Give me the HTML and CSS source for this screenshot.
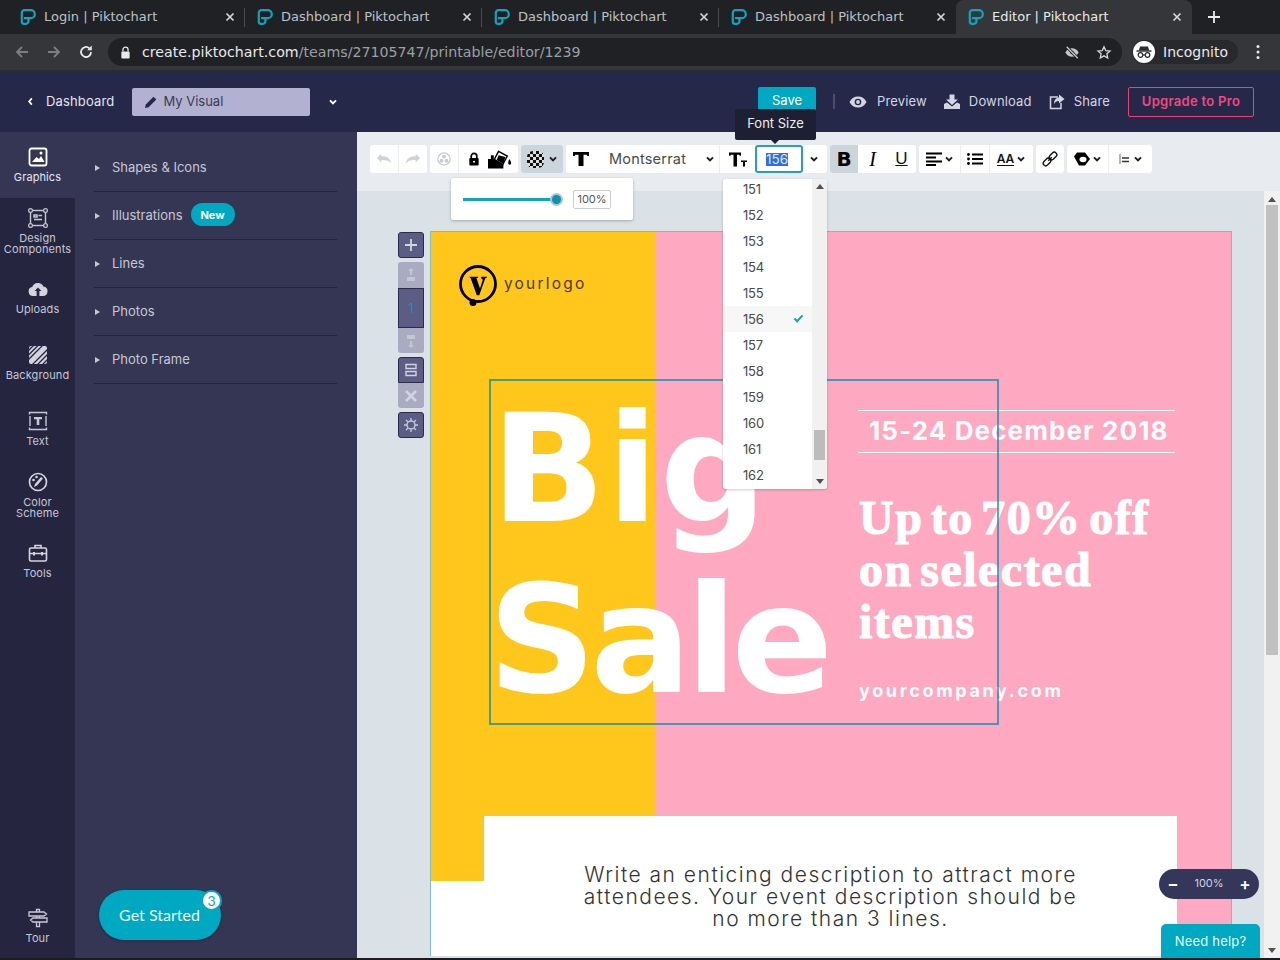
FILE: index.html
```
<!DOCTYPE html>
<html lang="en">
<head>
<meta charset="utf-8">
<title>Editor | Piktochart</title>
<link rel="stylesheet" href="styles.css">
</head>
<body>
<svg class="defs" width="0" height="0" aria-hidden="true">
  <symbol id="plogo" viewBox="0 0 16 16">
    <path d="M4 9.200h6.800a4 4 0 0 0 0-8H4.200A2.400 2.400 0 0 0 1.800 3.600V12.400A2.400 2.400 0 0 0 4.200 14.800H6A2.400 2.400 0 0 0 8.400 12.400V9.200" fill="none" stroke="#12a4bd" stroke-width="2.200"/>
  </symbol>
  <symbol id="close" viewBox="0 0 10 10"><path d="M1.500 1.500l7 7M8.500 1.500l-7 7" stroke="#d5d7da" stroke-width="1.700" fill="none"/></symbol>
  <symbol id="chev" viewBox="0 0 10 10"><path d="M2 3.400l3 3 3-3" stroke="#1e1e24" stroke-width="2" fill="none"/></symbol>
  <symbol id="chevw" viewBox="0 0 10 10"><path d="M2 3.400l3 3 3-3" stroke="#fff" stroke-width="2" fill="none"/></symbol>
</svg>
<div class="app">
  <div class="tabstrip">
    <div class="tab"><svg class="tab-logo"><use href="#plogo"/></svg><span class="tab-title">Login | Piktochart</span><svg class="tab-x"><use href="#close"/></svg></div>
    <div class="tab"><svg class="tab-logo"><use href="#plogo"/></svg><span class="tab-title">Dashboard | Piktochart</span><svg class="tab-x"><use href="#close"/></svg></div>
    <div class="tab"><svg class="tab-logo"><use href="#plogo"/></svg><span class="tab-title">Dashboard | Piktochart</span><svg class="tab-x"><use href="#close"/></svg></div>
    <div class="tab"><svg class="tab-logo"><use href="#plogo"/></svg><span class="tab-title">Dashboard | Piktochart</span><svg class="tab-x"><use href="#close"/></svg></div>
    <div class="tab tab-active"><svg class="tab-logo"><use href="#plogo"/></svg><span class="tab-title">Editor | Piktochart</span><svg class="tab-x"><use href="#close"/></svg></div>
    <svg class="newtab" viewBox="0 0 14 14"><path d="M7 1v12M1 7h12" stroke="#e8eaed" stroke-width="1.800"/></svg>
  </div>
  <div class="addressbar">
    <svg class="nav-ic" viewBox="0 0 16 16"><path d="M14 8H3M8 3L3 8l5 5" stroke="#7d7f82" stroke-width="1.800" fill="none"/></svg>
    <svg class="nav-ic" viewBox="0 0 16 16"><path d="M2 8h11M8 3l5 5-5 5" stroke="#7d7f82" stroke-width="1.800" fill="none"/></svg>
    <svg class="nav-ic" viewBox="0 0 16 16"><path d="M13 8a5 5 0 1 1-1.600-3.700" stroke="#e8eaed" stroke-width="1.800" fill="none"/><path d="M13.800 1.600v4.600H9.200z" fill="#e8eaed"/></svg>
    <div class="omnibox">
      <svg class="lock" viewBox="0 0 12 14"><path d="M3.200 6V4a2.800 2.800 0 0 1 5.600 0v2" stroke="#e8eaed" stroke-width="1.400" fill="none"/><rect x="1.500" y="6" width="9" height="7.500" rx="1" fill="#e8eaed"/></svg>
      <span class="url"><span class="url-host">create.piktochart.com</span>/teams/27105747/printable/editor/1239</span>
      <svg class="omni-ic" viewBox="0 0 18 16"><path d="M1.500 8C3.500 4.700 6 3.200 9 3.200s5.500 1.500 7.500 4.800c-2 3.300-4.500 4.800-7.500 4.800S3.500 11.300 1.500 8z" fill="#c4c6c9"/><circle cx="9" cy="8" r="2" fill="#202124"/><path d="M3 1.500l12.500 13" stroke="#202124" stroke-width="3.500"/><path d="M3 1.500l12.500 13" stroke="#c4c6c9" stroke-width="1.500"/></svg>
      <svg class="omni-ic star" viewBox="0 0 16 16"><path d="M8 1.800l1.900 4.100 4.500.5-3.300 3 .9 4.500L8 11.600l-4 2.300.9-4.500-3.300-3 4.500-.5z" stroke="#d5d7da" stroke-width="1.400" fill="none"/></svg>
    </div>
    <div class="incognito">
      <span class="incog-avatar"><svg viewBox="0 0 22 22"><path d="M7 5.500h8l1.200 4H5.800z" fill="#2a2b2e"/><path d="M3.500 10h15" stroke="#2a2b2e" stroke-width="1.400"/><circle cx="7.500" cy="14" r="2.300" stroke="#2a2b2e" stroke-width="1.200" fill="none"/><circle cx="14.500" cy="14" r="2.300" stroke="#2a2b2e" stroke-width="1.200" fill="none"/><path d="M9.800 14h2.400" stroke="#2a2b2e" stroke-width="1.200"/></svg></span>
      <span class="incog-label">Incognito</span>
    </div>
    <svg class="kebab" viewBox="0 0 4 16"><circle cx="2" cy="2.500" r="1.500" fill="#e8eaed"/><circle cx="2" cy="8" r="1.500" fill="#e8eaed"/><circle cx="2" cy="13.500" r="1.500" fill="#e8eaed"/></svg>
  </div>
  <header class="apphead">
    <svg class="back-chev" viewBox="0 0 8 10"><path d="M5.500 1.500L2.500 5l3 3.500" stroke="#fff" stroke-width="2" fill="none"/></svg>
    <span class="head-link dash">Dashboard</span>
    <div class="title-box">
      <svg class="pencil" viewBox="0 0 14 14"><path d="M1 13l.8-3.600L9.500 1.700l2.800 2.800-7.700 7.700z" fill="#26264a"/></svg>
      <span class="title-text">My Visual</span>
    </div>
    <svg class="title-chev"><use href="#chevw"/></svg>
    <div class="head-spacer"></div>
    <div class="save"><span class="save-text">Save</span></div>
    <span class="head-sep"></span>
    <svg class="h-ic eye" viewBox="0 0 18 12"><path d="M.5 6C2.500 2.200 5.500.5 9 .5s6.500 1.700 8.500 5.500c-2 3.800-5 5.500-8.500 5.500S2.500 9.800.5 6z" fill="#d5d6e3"/><circle cx="9" cy="6" r="3.300" fill="#26284a"/><circle cx="9" cy="6" r="1.900" fill="#d5d6e3"/></svg>
    <span class="head-link">Preview</span>
    <svg class="h-ic dl" viewBox="0 0 18 16"><path d="M6.500.5h5v5H15L9 11 3 5.500h3.500z" fill="#d5d6e3"/><path d="M1 10l3-1.500 5 4 5-4 3 1.500v5H1z" fill="#d5d6e3"/></svg>
    <span class="head-link">Download</span>
    <svg class="h-ic sh" viewBox="0 0 16 16"><path d="M9 3H1.500v11.500H12V9" stroke="#d5d6e3" stroke-width="1.500" fill="none"/><path d="M10 .5L15.500 5 10 9.500V7C7.500 7 6 8 5 10c0-3.500 1.500-6 5-6.500z" fill="#d5d6e3"/></svg>
    <span class="head-link">Share</span>
    <div class="upgrade"><span class="head-link up-text">Upgrade to Pro</span></div>
  </header>
  <div class="main">
    <nav class="rail">
      <div class="rail-item active">
        <svg class="rail-ic" viewBox="0 0 20 20"><rect x="1.500" y="1.500" width="17" height="17" rx="2" stroke="#fff" stroke-width="1.800" fill="none"/><path d="M4 15l4.500-5 2.500 2 2-3 3.500 6z" fill="#fff"/><circle cx="13" cy="6" r="1.500" fill="#fff"/></svg>
        <span>Graphics</span>
      </div>
      <div class="rail-item two">
        <svg class="rail-ic" viewBox="0 0 20 20"><rect x="2.500" y="2.500" width="15" height="15" stroke="#c7c8d6" stroke-width="1.400" fill="none"/><circle cx="2.500" cy="2.500" r="1.900" fill="#25253f" stroke="#c7c8d6" stroke-width="1.200"/><circle cx="17.500" cy="2.500" r="1.900" fill="#25253f" stroke="#c7c8d6" stroke-width="1.200"/><circle cx="2.500" cy="17.500" r="1.900" fill="#25253f" stroke="#c7c8d6" stroke-width="1.200"/><circle cx="17.500" cy="17.500" r="1.900" fill="#25253f" stroke="#c7c8d6" stroke-width="1.200"/><path d="M6 7h3v2H6zM10.500 7.500H14M6 11.500h8" stroke="#c7c8d6" stroke-width="1.500"/></svg>
        <span>Design<br>Components</span>
      </div>
      <div class="rail-item">
        <svg class="rail-ic" viewBox="0 0 20 20"><path d="M5 17a4.500 4.500 0 0 1-.8-8.900A6 6 0 0 1 15.400 7.500 4.800 4.800 0 0 1 15.500 17z" fill="#d3d4e0"/><path d="M10 8.500l3.400 3.600h-2V17H8.600v-4.900h-2z" fill="#25253f"/></svg>
        <span>Uploads</span>
      </div>
      <div class="rail-item">
        <svg class="rail-ic" viewBox="0 0 20 20"><defs><clipPath id="bgclip"><rect x="1" y="1" width="18" height="18" rx="2"/></clipPath></defs><rect x="1" y="1" width="18" height="18" rx="2" fill="#d3d4e0"/><g clip-path="url(#bgclip)" stroke="#25253f" stroke-width="1.300"><path d="M-2 8L8-2M-2 12.500L12.500-2M-2 17L17-2M2.500 21.500L21.500 2.500M7 22L22 7M11.500 22.500l11-11"/></g></svg>
        <span>Background</span>
      </div>
      <div class="rail-item">
        <svg class="rail-ic" viewBox="0 0 20 20"><path d="M1.500 3.500v-2h17v2M1.500 16.500v2h17v-2M2 5v10M18 5v10" stroke="#c7c8d6" stroke-width="1.400" fill="none"/><path d="M6 6h8v2.300h-2.700V14H8.700V8.300H6z" fill="#c7c8d6"/></svg>
        <span>Text</span>
      </div>
      <div class="rail-item two">
        <svg class="rail-ic" viewBox="0 0 20 20"><circle cx="10" cy="10" r="8.500" stroke="#d3d4e0" stroke-width="1.700" fill="none"/><path d="M6 15l1-3 6-7 2 1.500-6 7z" fill="#d3d4e0"/><circle cx="5.500" cy="8" r="1.300" fill="#d3d4e0"/><circle cx="8.500" cy="5" r="1.300" fill="#d3d4e0"/></svg>
        <span>Color<br>Scheme</span>
      </div>
      <div class="rail-item">
        <svg class="rail-ic" viewBox="0 0 20 20"><rect x="1.500" y="5" width="17" height="13" rx="1.500" stroke="#d3d4e0" stroke-width="1.600" fill="none"/><path d="M7 5V2.500h6V5M1.500 10.500h17" stroke="#d3d4e0" stroke-width="1.600" fill="none"/><path d="M6 9v3.500M14 9v3.500" stroke="#d3d4e0" stroke-width="2"/></svg>
        <span>Tools</span>
      </div>
      <div class="rail-item tour">
        <svg class="rail-ic" viewBox="0 0 20 20"><path d="M8.500 1.500h3v17h-3z" stroke="#c7c8d6" stroke-width="1.300" fill="#25253f"/><path d="M1 4h15l2.500 2-2.500 2H1zM19 10H5l-2.500 2L5 14h14z" stroke="#c7c8d6" stroke-width="1.300" fill="#25253f"/></svg>
        <span>Tour</span>
      </div>
    </nav>
    <aside class="panel">
      <div class="panel-row"><i class="tri"></i><span>Shapes &amp; Icons</span></div>
      <div class="panel-row"><i class="tri"></i><span>Illustrations</span><b class="new">New</b></div>
      <div class="panel-row"><i class="tri"></i><span>Lines</span></div>
      <div class="panel-row"><i class="tri"></i><span>Photos</span></div>
      <div class="panel-row"><i class="tri"></i><span>Photo Frame</span></div>
      <div class="getstarted"><span class="gs-text">Get Started</span><span class="badge">3</span></div>
      <div class="collapse"><i></i></div>
    </aside>
    <section class="editor">
      <div class="toolbar">
        <div class="tgroup">
          <span class="tbtn w29 sep"><svg class="ti" viewBox="0 0 18 14"><path d="M1 6l5-5v3c6 0 10 2 11 8-2-3-5-4-11-4v3z" fill="#cfd2d6"/></svg></span>
          <span class="tbtn w28"><svg class="ti" viewBox="0 0 18 14"><path d="M17 6l-5-5v3C6 4 2 6 1 12c2-3 5-4 11-4v3z" fill="#cfd2d6"/></svg></span>
        </div>
        <div class="tgroup">
          <span class="tbtn w29 sep"><svg class="ti" viewBox="0 0 16 16"><circle cx="8" cy="8" r="7" stroke="#c8cbcf" stroke-width="1.500" fill="none"/><circle cx="8" cy="5.200" r="2.200" fill="#c8cbcf"/><circle cx="5.200" cy="10" r="2.200" fill="#c8cbcf"/><circle cx="10.800" cy="10" r="2.200" fill="#c8cbcf"/></svg></span>
          <span class="tbtn w29"><svg class="ti" viewBox="0 0 12 15"><path d="M3 7V4.500a3 3 0 0 1 6 0V7" stroke="#000" stroke-width="1.800" fill="none"/><rect x="1" y="6.500" width="10" height="8" rx="1" fill="#000"/><circle cx="6" cy="10.500" r="1.100" fill="#fff"/></svg></span>
          <span class="tbtn w30"><svg class="ti paint" viewBox="0 0 26 20"><path d="M0 10h16v10H0z" fill="#000"/><path d="M3 10V6h3v4" fill="#000"/><path d="M11 2l9 5-4.500 8.500-9-5z" fill="#fff" stroke="#000" stroke-width="1.500"/><path d="M11 6l7 2-2 7-7-4z" fill="#000"/><path d="M22 10c1.500 2 2.500 3.500 2 5s-3 1-3-.5.5-3 1-4.500z" fill="#000"/></svg></span>
        </div>
        <div class="tgroup pressed">
          <span class="checker"></span><svg class="mini"><use href="#chev"/></svg>
        </div>
        <div class="tgroup fontg">
          <span class="tbtn w30"><svg class="ti" viewBox="0 0 16 16" preserveAspectRatio="none"><path d="M0 0h16v4.500h-1.500L13.500 3H10.500v13h-5V3H2.500L1.500 4.500H0z" fill="#000"/></svg></span>
          <span class="fontname">Montserrat</span>
          <svg class="mini fn"><use href="#chev"/></svg>
          <span class="tbtn sizeic"><svg class="ti size-t" viewBox="0 0 18 14"><path d="M0 0h12v3.300h-1L10 2.200H8v11.800H4.500V2.200H2.200L1.200 3.300H0z" fill="#000"/><path d="M12 8h6v1.400h-2V14h-2V9.400h-2z" fill="#000"/></svg></span>
          <span class="sizeinput"><span class="selected">156</span></span>
          <svg class="mini sz"><use href="#chev"/></svg>
        </div>
        <div class="tgroup bold-group">
          <span class="tbtn w28 on bold">B</span>
          <span class="tbtn w29 ital">I</span>
          <span class="tbtn w29 under">U</span>
        </div>
        <div class="tgroup">
          <span class="tbtn w42 sep"><svg class="ti" viewBox="0 0 16 13"><path d="M0 1h16M0 5h10M0 9h16M0 12.500h10" stroke="#000" stroke-width="2"/></svg><svg class="mini"><use href="#chev"/></svg></span>
          <span class="tbtn w29 sep"><svg class="ti" viewBox="0 0 16 12"><path d="M5 1.500h11M5 6h11M5 10.500h11" stroke="#000" stroke-width="1.800"/><circle cx="1.500" cy="1.500" r="1.400"/><circle cx="1.500" cy="6" r="1.400"/><circle cx="1.500" cy="10.500" r="1.400"/></svg></span>
          <span class="tbtn w43"><span class="aa">AA</span><svg class="mini"><use href="#chev"/></svg></span>
        </div>
        <div class="tgroup">
          <span class="tbtn w28"><svg class="ti link" viewBox="0 0 16 16"><g fill="none" stroke="#111" stroke-width="1.400" transform="rotate(-45 8 8)"><rect x="-.5" y="5.500" width="8.500" height="5" rx="2.500"/><rect x="8" y="5.500" width="8.500" height="5" rx="2.500"/><path d="M5.500 8h5"/></g></svg></span>
        </div>
        <div class="tgroup">
          <span class="tbtn w42 sep"><svg class="ti" viewBox="0 0 16 13"><path d="M3 0h8l5 6.500-5 6.500H5L0 4z" fill="#000"/><ellipse cx="9" cy="7" rx="3.500" ry="2.800" fill="#fff"/></svg><svg class="mini"><use href="#chev"/></svg></span>
          <span class="tbtn w43"><svg class="ti small" viewBox="0 0 12 12"><path d="M1 1v10" stroke="#b5b5b5" stroke-width="2"/><path d="M3 5h7M3 8.500h7" stroke="#333" stroke-width="1.400"/></svg><svg class="mini"><use href="#chev"/></svg></span>
        </div>
      </div>
      <div class="workspace">
        <div class="canvas">
          <div class="poster">
            <div class="p-yellow"></div>
            <div class="p-pink"></div>
            <div class="p-white"></div>
            <svg class="p-logo" viewBox="0 0 40 44"><circle cx="20" cy="20" r="17.500" stroke="#000" stroke-width="2.800" fill="none"/><g transform="translate(4 4) scale(.8)"><path d="M9 11h11v1.200l-2 .5 4.500 13 3.500-11-2-2V11h7v1.200l-2 .8-7.500 21h-3L11 13z" fill="#000"/></g><circle cx="15" cy="38.500" r="3.500" fill="#000"/></svg>
            <div class="p-logotext">yourlogo</div>
            <div class="p-big p-big1">Big</div>
            <div class="p-big p-big2">Sale</div>
            <div class="p-date">15-24 December 2018</div>
            <div class="p-offer">Up to 70% off<br>on selected<br>items</div>
            <div class="p-site">yourcompany.com</div>
            <div class="p-desc">Write an enticing description to attract more<br>attendees. Your event description should be<br>no more than 3 lines.</div>
            <div class="selection"></div>
          </div>
          <div class="sidebtns">
            <span class="sb dark"><svg viewBox="0 0 14 14"><path d="M7 1v12M1 7h12" stroke="#d3d4e0" stroke-width="1.800"/></svg></span>
            <div class="sbgroup">
              <span class="sb light"><svg viewBox="0 0 14 14"><path d="M7 0l3 3H8v4H6V3H4zM3 9h8v4H3z" fill="#c4c6d6"/></svg></span>
              <span class="sb dark num">1</span>
              <span class="sb light"><svg viewBox="0 0 14 14"><path d="M3 1h8v4H3zM6 7h2v4h2l-3 3-3-3h2z" fill="#c4c6d6"/></svg></span>
            </div>
            <div class="sbgroup">
              <span class="sb dark"><svg viewBox="0 0 14 14"><path d="M2 1.500h10v4H2zM2 8.500h10v4H2z" stroke="#d3d4e0" stroke-width="1.400" fill="none"/></svg></span>
              <span class="sb light"><svg viewBox="0 0 14 14"><path d="M2 2l10 10M12 2L2 12" stroke="#d3d4e0" stroke-width="2.600"/></svg></span>
            </div>
            <span class="sb dark"><svg viewBox="0 0 14 14"><circle cx="7" cy="7" r="4" stroke="#c4c6d6" stroke-width="1.500" fill="none"/><path d="M7 0v3M7 11v3M0 7h3M11 7h3M2 2l2 2M10 10l2 2M12 2l-2 2M4 10l-2 2" stroke="#c4c6d6" stroke-width="1.400"/></svg></span>
          </div>
          <div class="zoomctl"><span class="zc">−</span><span class="zv">100%</span><span class="zc">+</span></div>
          <div class="needhelp">Need help?</div>
        </div>
        <div class="vscroll"><i class="up"></i><span class="vthumb"></span><i class="down"></i></div>
      </div>
      <div class="opacity-pop">
        <span class="slider"><i class="knob"></i></span>
        <span class="opval">100%</span>
      </div>
      <div class="tooltip">Font Size</div>
      <div class="sizes">
        <div class="sizes-list">
          <div class="sz-item">151</div><div class="sz-item">152</div><div class="sz-item">153</div><div class="sz-item">154</div><div class="sz-item">155</div>
          <div class="sz-item cur">156<svg class="check" viewBox="0 0 12 10"><path d="M1.500 5l3 3 6-6.500" stroke="#12a4bd" stroke-width="2.200" fill="none"/></svg></div>
          <div class="sz-item">157</div><div class="sz-item">158</div><div class="sz-item">159</div><div class="sz-item">160</div><div class="sz-item">161</div><div class="sz-item">162</div>
        </div>
        <div class="sizes-scroll"><i class="up"></i><span class="sthumb"></span><i class="down"></i></div>
      </div>
    </section>
  </div>
</div>
</body>
</html>
```
FILE: styles.css
```
* { box-sizing: border-box; }
html, body { margin: 0; height: 100%; overflow: hidden; }
body { font-family: "Inter", "Liberation Sans", sans-serif; background: #fff; }
.defs { position: absolute; }
.app { height: 960px; display: flex; flex-direction: column; }

/* browser chrome */
.tabstrip { height: 34px; background: #202124; display: flex; align-items: center; padding-left: 8px; font-family: "DejaVu Sans", sans-serif; }
.tab { width: 237px; height: 34px; display: flex; align-items: center; padding-left: 12px; position: relative; color: #bdc1c6; font-size: 13px; }
.tab::after { content: ""; position: absolute; right: 0; top: 8px; height: 19px; width: 1px; background: #4a4c50; }
.tab:nth-child(4)::after, .tab-active::after { display: none; }
.tab-active { background: #35363a; border-radius: 8px 8px 0 0; color: #e8eaed; width: 236px; }
.tab-logo { width: 16px; height: 16px; flex: none; margin-bottom: 1px; }
.tab-title { margin-left: 8px; flex: 1; white-space: nowrap; padding-bottom: 2px; }
.tab-x { width: 10px; height: 10px; margin-right: 10px; flex: none; }
.newtab { width: 14px; height: 14px; margin-left: 15px; }
.addressbar { height: 37px; background: #35363a; display: flex; align-items: center; padding: 0 0 0 14px; border-bottom: 1px solid #2b2c30; }
.nav-ic { width: 16px; height: 16px; margin-right: 16px; flex: none; }
.nav-ic:nth-child(3) { margin-right: 14px; }
.omnibox { width: 1014px; height: 28px; border-radius: 14px; background: #202124; display: flex; align-items: center; padding-left: 12px; }
.lock { width: 11px; height: 13px; flex: none; }
.url { margin-left: 11px; font-family: "DejaVu Sans", sans-serif; font-size: 14.200px; color: #9aa0a6; flex: 1; white-space: nowrap; }
.url-host { color: #e8eaed; }
.omni-ic { width: 16px; height: 15px; flex: none; margin-right: 16px; }
.star { margin-right: 10px; }
.incognito { width: 106px; height: 24px; margin-left: 10px; border-radius: 12px; background: #28292c; display: flex; align-items: center; padding-left: 1px; color: #e8eaed; font: 14px "DejaVu Sans", sans-serif; }
.incog-avatar { width: 22px; height: 22px; border-radius: 50%; background: #fff; display: block; flex: none; }
.incog-avatar svg { display: block; width: 22px; height: 22px; }
.incog-label { margin-left: 8px; }
.kebab { width: 4px; height: 16px; margin-left: 18px; }

/* app header */
.apphead { height: 61px; background: #26284a; display: flex; align-items: center; padding: 0 26px 0 27px; font-size: 13px; color: #d5d6e3; flex: none; }
.back-chev { width: 7px; height: 9px; }
.head-link { white-space: nowrap; padding-bottom: 2px; letter-spacing: .15px; }
.dash { margin-left: 12px; color: #e4e5ee; }
.title-box { width: 178px; height: 28px; margin-left: 18px; background: #b3b1d1; border-radius: 2px; display: flex; align-items: center; padding-left: 12px; color: #3a3a55; }
.title-text { padding-bottom: 1px; }
.pencil { width: 14px; height: 14px; margin-right: 5px; }
.title-chev { width: 10px; height: 10px; margin-left: 18px; }
.head-spacer { flex: 1; }
.save { width: 58px; height: 29px; background: #00a8c2; border-radius: 2px; color: #fff; display: flex; align-items: center; justify-content: center; }
.save-text { padding-bottom: 4px; }
.head-sep { width: 2px; height: 15px; background: #4a4c70; margin: 0 14px 0 17px; }
.h-ic { flex: none; }
.eye { width: 18px; height: 12px; margin-right: 10px; }
.dl { width: 18px; height: 16px; margin: 0 8px 0 16px; }
.sh { width: 16px; height: 16px; margin: 0 9px 0 17px; }
.upgrade { width: 126px; height: 30px; margin-left: 18px; border: 1px solid #e8447a; border-radius: 2px; color: #ee4a80; font-weight: 600; display: flex; align-items: center; justify-content: center; }
.up-text { letter-spacing: .3px; }

.main { flex: 1; display: flex; min-height: 0; border-bottom: 2px solid #1c1c20; }

/* tool rail */
.rail { width: 75px; background: #25253f; display: flex; flex-direction: column; color: #c7c8d6; font-size: 11px; text-align: center; line-height: 11px; letter-spacing: .1px; flex: none; }
.rail-item { height: 66px; padding-top: 15px; display: flex; flex-direction: column; align-items: center; white-space: nowrap; }
.rail-item.two { padding-top: 10px; }
.rail-item.active { background: #343654; color: #e6e7f0; }
.rail-ic { width: 20px; height: 20px; margin-bottom: 5px; flex: none; }
.tour { margin-top: auto; height: 50px; padding-top: 0; }

/* side panel */
.panel { width: 282px; background: #343654; padding: 12px 20px 0 19px; position: relative; flex: none; color: #c7c8d6; font-size: 13px; }
.panel-row { height: 48px; border-bottom: 1px solid #23243e; display: flex; align-items: center; padding-bottom: 2px; }
.tri { width: 0; height: 0; border-left: 5px solid #c7c8d6; border-top: 3.500px solid transparent; border-bottom: 3.500px solid transparent; margin: 2px 12px 0 1px; }
.new { margin-left: 8px; width: 44px; height: 23px; border-radius: 12px; background: #00a8c2; color: #fff; font-size: 11px; display: flex; align-items: center; justify-content: center; font-weight: 700; }
.getstarted { position: absolute; left: 24px; top: 758px; width: 122px; height: 50px; border-radius: 25px; background: #00a8c2; color: #eafafd; font: 16px "Lato", sans-serif; display: flex; align-items: center; justify-content: center; box-shadow: 0 1px 3px rgba(0,0,0,.25); }
.gs-text { padding-bottom: 2px; margin-left: -1px; }
.badge { position: absolute; right: -1px; top: 0; width: 21px; height: 21px; border-radius: 50%; background: #fff; border: 2px solid #00a8c2; color: #00a8c2; font-size: 14px; display: flex; align-items: center; justify-content: center; }
.collapse { position: absolute; left: 282px; top: 358px; width: 13px; height: 37px; background: #25253f; clip-path: polygon(0 0, 100% 15%, 100% 85%, 0 100%); display: flex; align-items: center; justify-content: center; }
.collapse i { width: 0; height: 0; border-right: 6px solid #d3d4e0; border-top: 4px solid transparent; border-bottom: 4px solid transparent; }

/* editor */
.editor { flex: 1; min-width: 0; display: flex; flex-direction: column; position: relative; }
.toolbar { height: 59px; background: #e8ebf0; flex: none; display: flex; align-items: flex-start; padding: 13px 0 0 13px; gap: 3px; }
.tgroup { height: 28px; display: flex; background: #fff; border-radius: 3px; overflow: hidden; flex: none; }
.tbtn { height: 28px; display: flex; align-items: center; justify-content: center; flex: none; gap: 2px; }
.sep { border-right: 1px solid #eceef1; }
.w28 { width: 28px; } .w29 { width: 29px; } .w30 { width: 30px; } .w42 { width: 42px; } .w43 { width: 43px; }
.ti { width: 16px; height: 14px; display: block; }
.paint { width: 25px; height: 20px; margin-right: 5px; }
.small { width: 12px; height: 12px; }
.link { height: 16px; }
.mini { width: 10px; height: 10px; flex: none; }
.pressed { width: 42px; background: #ccd5dc; align-items: center; padding-left: 6px; gap: 4px; }
.checker { width: 17px; height: 17px; background: conic-gradient(#111 25%, #ddd 0 50%, #111 0 75%, #ddd 0) 0 0 / 6px 6px; border-radius: 35%; flex: none; }
.fontg { width: 261px; align-items: center; }
.fontname { width: 96px; margin-left: 13px; font-size: 14.500px; color: #4a4a4a; letter-spacing: .2px; white-space: nowrap; padding-bottom: 2px; }
.sizeic { margin-left: 4px; border-left: 1px solid #eceef1; width: 36px; }
.size-t { width: 18px; height: 15px; }
.sizeinput { width: 48px; height: 28px; border: 2px solid #2a9fb0; border-radius: 3px; display: flex; align-items: center; justify-content: center; font-size: 13.500px; }
.selected { background: #2f6fde; color: #dfe9fb; line-height: 13px; margin-right: 4px; }
.sz { margin-left: 6px; }
.bold-group { width: 86px; }
.on { background: #ccd5dc; }
.bold { font: 700 20px "DejaVu Sans", sans-serif; color: #000; }
.ital { font: italic 20px "Liberation Serif", serif; color: #000; }
.under { font: 17px "Liberation Sans", sans-serif; color: #111; text-decoration: underline; }
.aa { font-size: 12px; font-weight: 600; border-bottom: 1px solid #111; line-height: 12px; color: #111; }

/* workspace */
.workspace { flex: 1; min-height: 0; display: flex; }
.canvas { flex: 1; background: #dae1e7; position: relative; overflow: hidden; }
.vscroll { width: 16px; background: #f1f1f1; display: flex; flex-direction: column; align-items: center; position: relative; }
.vscroll .up, .sizes-scroll .up { width: 0; height: 0; border-bottom: 5px solid #505050; border-left: 4px solid transparent; border-right: 4px solid transparent; }
.vscroll .down, .sizes-scroll .down { width: 0; height: 0; border-top: 5px solid #505050; border-left: 4px solid transparent; border-right: 4px solid transparent; }
.vscroll .up { margin-top: 6px; }
.vthumb { width: 12px; height: 450px; background: #c1c1c1; margin-top: 3px; }
.vscroll .down { margin-top: auto; margin-bottom: 5px; }

/* poster: free canvas */
.poster { position: absolute; left: 73px; top: 40px; width: 802px; height: 725px; background: #fff; border: 1px solid #7fbcc4; border-bottom: 0; overflow: hidden; }
.p-yellow { position: absolute; left: 0; top: 0; width: 224px; height: 649px; background: #ffc61b; }
.p-pink { position: absolute; left: 224px; top: 0; width: 576px; height: 760px; background: #ffa8c1; }
.p-white { position: absolute; left: 53px; top: 584px; width: 693px; height: 200px; background: #fff; }
.p-logo { position: absolute; left: 27px; top: 32px; width: 40px; height: 44px; }
.p-logotext { position: absolute; left: 73px; top: 42px; font-size: 15.500px; letter-spacing: 2.200px; color: #4a3a10; }
.p-big { position: absolute; color: #fff; font-family: "DejaVu Sans", sans-serif; font-weight: 700; font-size: 150px; line-height: 170px; white-space: nowrap; }
.p-big1 { left: 60px; top: 152px; letter-spacing: 1.500px; }
.p-big2 { left: 57px; top: 323px; letter-spacing: -5.700px; }
.p-date { position: absolute; left: 427px; top: 178px; width: 317px; height: 43px; border-top: 1px solid #fff; border-bottom: 1px solid #fff; color: #fff; font-weight: 700; font-size: 26px; letter-spacing: 1.100px; line-height: 40px; padding-left: 11px; white-space: nowrap; }
.p-offer { position: absolute; left: 428px; top: 260px; color: #fff; font-family: "Liberation Serif", serif; font-weight: 700; font-size: 48px; line-height: 52px; letter-spacing: 1.500px; word-spacing: -6px; white-space: nowrap; -webkit-text-stroke: 1.200px #fff; }
.p-site { position: absolute; left: 428px; top: 448px; color: #fff; font-weight: 700; font-size: 18px; letter-spacing: 2.650px; white-space: nowrap; }
.p-desc { position: absolute; left: 53px; top: 632px; width: 693px; text-align: center; font-size: 21px; line-height: 22px; letter-spacing: 1.500px; color: #333; font-weight: 300; white-space: nowrap; }
.selection { position: absolute; left: 58px; top: 147px; width: 510px; height: 346px; border: 2px solid rgba(0,140,180,.7); }

/* overlays */
.sidebtns { position: absolute; left: 41px; top: 41px; width: 26px; display: flex; flex-direction: column; gap: 4px; }
.sbgroup { display: flex; flex-direction: column; }
.sb { width: 26px; height: 26px; display: flex; align-items: center; justify-content: center; border-radius: 3px; flex: none; }
.sb svg { width: 14px; height: 14px; }
.sb.dark { background: #5c5d85; border: 1px solid #2b2c48; }
.sb.light { background: #a9abc1; border: 0; }
.sb.num { height: 40px; color: #2a8bb0; font-size: 13px; border-radius: 0; }
.sbgroup .sb:first-child { border-radius: 3px 3px 0 0; }
.sbgroup .sb:last-child { border-radius: 0 0 3px 3px; height: 25px; }
.zoomctl { position: absolute; left: 802px; top: 678px; width: 100px; height: 30px; border-radius: 15px; background: #34365a; color: #d3d4e0; font-size: 11px; display: flex; align-items: center; justify-content: space-between; padding: 0 8px; }
.zv { padding-bottom: 2px; }
.zc { font-size: 17px; color: #fff; font-weight: 600; width: 12px; text-align: center; }
.needhelp { position: absolute; left: 804px; top: 733px; width: 99px; height: 40px; border-radius: 5px 5px 0 0; background: #00a8c2; color: #e6fafd; font-size: 13px; display: flex; justify-content: center; padding-top: 9px; letter-spacing: .2px; }
.opacity-pop { position: absolute; left: 94px; top: 46px; width: 182px; height: 42px; background: #fff; border-radius: 2px; box-shadow: 0 1px 3px rgba(0,0,0,.25); display: flex; align-items: center; padding-left: 12px; }
.slider { width: 94px; height: 3px; background: #12a4bd; position: relative; flex: none; }
.knob { position: absolute; right: -6px; top: -5px; width: 13px; height: 13px; border-radius: 50%; background: #0c93aa; border: 2px solid #a5c9d2; }
.opval { width: 38px; height: 19px; margin-left: 16px; border: 1px solid #ccc; border-radius: 2px; font-size: 11px; color: #555; display: flex; align-items: center; justify-content: center; }
.tooltip { position: absolute; left: 378px; top: -23px; width: 81px; height: 31px; background: #1d1f33; color: #eee; font-size: 13px; display: flex; align-items: center; justify-content: center; border-radius: 2px; padding-bottom: 3px; }
.tooltip::after { content: ""; position: absolute; left: 36px; bottom: -4px; border-top: 4px solid #1d1f33; border-left: 4px solid transparent; border-right: 4px solid transparent; }
.sizes { position: absolute; left: 366px; top: 47px; width: 104px; height: 310px; background: #fff; border-radius: 3px; overflow: hidden; display: flex; box-shadow: 0 1px 3px rgba(0,0,0,.2); }
.sizes-list { flex: 1; margin-top: -3px; }
.sz-item { height: 26px; padding-left: 20px; font-size: 13px; line-height: 26px; letter-spacing: -.2px; color: #4a4a4a; position: relative; }
.cur { background: #f7f7f7; }
.check { position: absolute; right: 8px; top: 8px; width: 11px; height: 9px; }
.sizes-scroll { width: 15px; background: #f1f1f1; display: flex; flex-direction: column; align-items: center; position: relative; }
.sizes-scroll .up { margin-top: 5px; }
.sthumb { position: absolute; top: 251px; width: 11px; height: 30px; background: #bcbcbc; }
.sizes-scroll .down { margin-top: auto; margin-bottom: 5px; }
```
